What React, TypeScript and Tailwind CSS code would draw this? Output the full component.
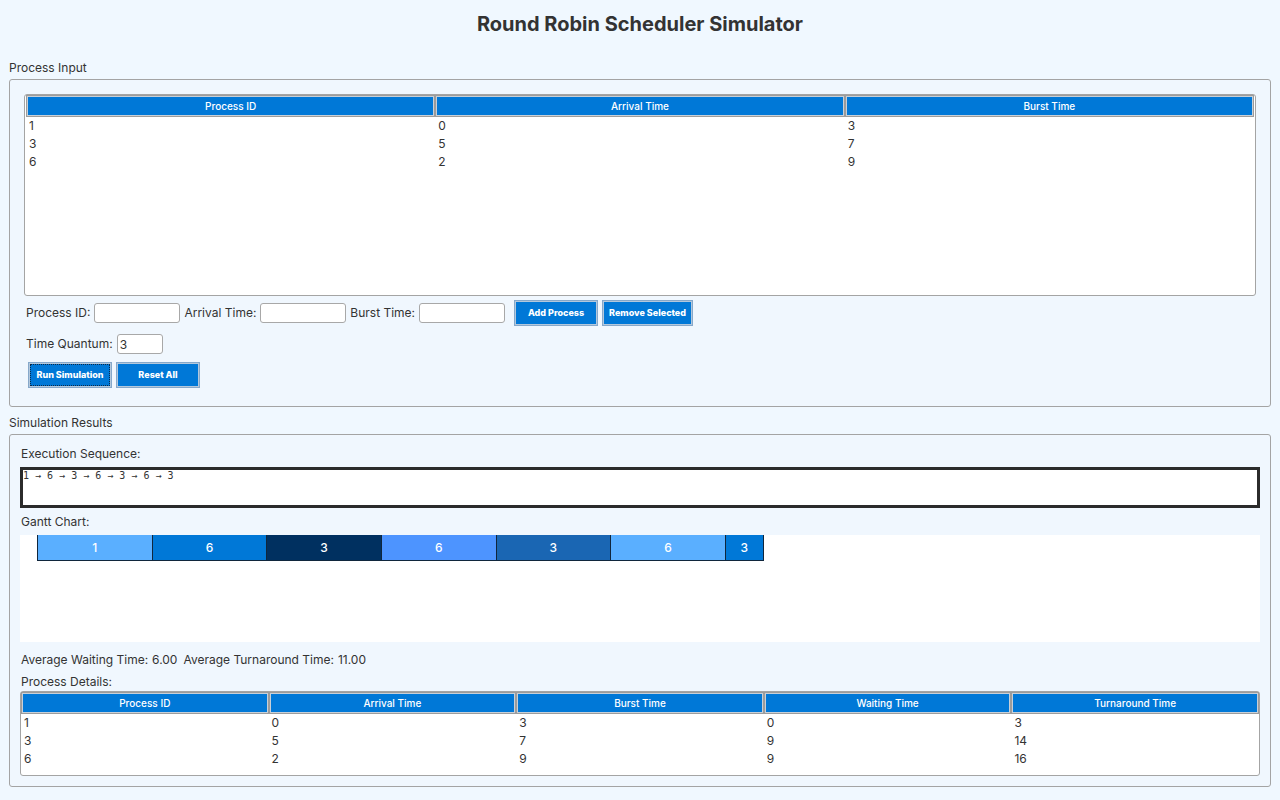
import type { ReactNode } from "react";

const processes = [
  [1, 0, 3],
  [3, 5, 7],
  [6, 2, 9],
];

const details = [
  [1, 0, 3, 0, 3],
  [3, 5, 7, 9, 14],
  [6, 2, 9, 9, 16],
];

const slices = [
  { id: 1, length: 3, color: "bg-[#5aafff]" },
  { id: 6, length: 3, color: "bg-[#0078d7]" },
  { id: 3, length: 3, color: "bg-[#003060]" },
  { id: 6, length: 3, color: "bg-[#4d94ff]" },
  { id: 3, length: 3, color: "bg-[#1a66b3]" },
  { id: 6, length: 3, color: "bg-[#5aafff]" },
  { id: 3, length: 1, color: "bg-[#0078d7]" },
];

const total = slices.reduce((sum, slice) => sum + slice.length, 0);

function DataTable({ label, columns, rows }: { label: string; columns: string[]; rows: number[][] }) {
  return (
    <table aria-label={label} className="w-full table-fixed border-collapse">
      <thead>
        <tr>
          {columns.map((column) => (
            <th key={column} scope="col" className="p-0">
              <div className="border border-[#9c9c9c]">
                <div className="border border-[#c8d0d8] bg-[#0078d7] text-center text-[10px] leading-[18px] font-medium text-white">
                  {column}
                </div>
              </div>
            </th>
          ))}
        </tr>
      </thead>
      <tbody>
        {rows.map((row) => (
          <tr key={row[0]}>
            {row.map((value, i) => (
              <td key={i} className="px-[3px] py-0 leading-[18px]">
                {value}
              </td>
            ))}
          </tr>
        ))}
      </tbody>
    </table>
  );
}

function Field({ id, label, value, small }: { id: string; label: string; value?: string; small?: boolean }) {
  return (
    <div className="flex items-center gap-1">
      <label htmlFor={id}>{label}</label>
      <input
        id={id}
        type="text"
        defaultValue={value}
        className={`h-5 rounded-[3px] border border-[#a8a8a8] bg-white px-[2px] outline-none ${small ? "w-[46px]" : "w-[86px]"}`}
      />
    </div>
  );
}

function Button({ children, focused }: { children: ReactNode; focused?: boolean }) {
  return (
    <button type="button" className="h-[26px] min-w-[84px] border border-[#86a8ca]">
      <span className="flex h-full border border-[#b4c8dc] bg-[#0078d7] text-[9px] font-extrabold text-white">
        <span
          className={`flex flex-1 items-center justify-center border px-1 ${focused ? "border-dotted border-[#0a2a4a]" : "border-transparent"}`}
        >
          {children}
        </span>
      </span>
    </button>
  );
}

export default function App() {
  return (
    <main className="min-h-screen bg-[#f0f8ff] px-[9px] pt-2 pb-3 font-['Inter',sans-serif] text-[12px] leading-[18px] text-[#333]">
      <h1 className="mb-[19px] text-center text-[20px] leading-8 font-bold">Round Robin Scheduler Simulator</h1>

      <section aria-labelledby="input-title">
        <h2 id="input-title" className="mb-[2px]">Process Input</h2>
        <div className="rounded-[3px] border border-[#a4a4a4] bg-[#f0f7fe] px-[14px] pt-[14px] pb-[18px]">
          <div className="h-[202px] rounded-[3px] border border-[#a4a4a4] bg-white px-px">
            <DataTable label="Processes" columns={["Process ID", "Arrival Time", "Burst Time"]} rows={processes} />
          </div>
          <div className="mt-1 flex flex-wrap items-center gap-1 px-[2px]">
            <Field id="pid" label="Process ID:" />
            <Field id="arrival" label="Arrival Time:" />
            <Field id="burst" label="Burst Time:" />
            <div className="ml-[5px] flex gap-1">
              <Button>Add Process</Button>
              <Button>Remove Selected</Button>
            </div>
          </div>
          <div className="mt-2 px-[2px]">
            <Field id="quantum" label="Time Quantum:" value="3" small />
          </div>
          <div className="mt-2 flex gap-1 px-1">
            <Button focused>Run Simulation</Button>
            <Button>Reset All</Button>
          </div>
        </div>
      </section>

      <section aria-labelledby="results-title" className="mt-[7px]">
        <h2 id="results-title" className="mb-[2px]">Simulation Results</h2>
        <div className="rounded-[3px] border border-[#a4a4a4] bg-[#f0f7fe] p-[10px]">
          <label htmlFor="sequence" className="block px-px">Execution Sequence:</label>
          <textarea
            id="sequence"
            readOnly
            defaultValue="1 → 6 → 3 → 6 → 3 → 6 → 3"
            className="mt-1 block h-[41px] w-full resize-none border-3 border-[#2b2b2b] bg-white font-['DejaVu_Sans_Mono',monospace] text-[10px] leading-3 outline-none"
          />
          <h3 className="mt-[5px] px-px">Gantt Chart:</h3>
          <div className="mt-1 h-[107px] bg-white pl-[17px]">
            <div className="flex h-[26px] w-[727px] max-w-full border-l border-[#10263c]">
              {slices.map((slice, i) => (
                <div
                  key={i}
                  className={`flex items-center justify-center border-r border-b border-[#10263c] font-medium text-white ${slice.color}`}
                  style={{ width: `${(slice.length / total) * 100}%` }}
                >
                  {slice.id}
                </div>
              ))}
            </div>
          </div>
          <div className="mt-[9px] flex gap-[6px] px-px">
            <p className="flex gap-1">
              <span>Average Waiting Time:</span>
              <span>6.00</span>
            </p>
            <p className="flex gap-1">
              <span>Average Turnaround Time:</span>
              <span>11.00</span>
            </p>
          </div>
          <h3 className="mt-1 px-px">Process Details:</h3>
          <div className="h-[85px] rounded-[3px] border border-[#a4a4a4] bg-white">
            <DataTable
              label="Process Details"
              columns={["Process ID", "Arrival Time", "Burst Time", "Waiting Time", "Turnaround Time"]}
              rows={details}
            />
          </div>
        </div>
      </section>
    </main>
  );
}
